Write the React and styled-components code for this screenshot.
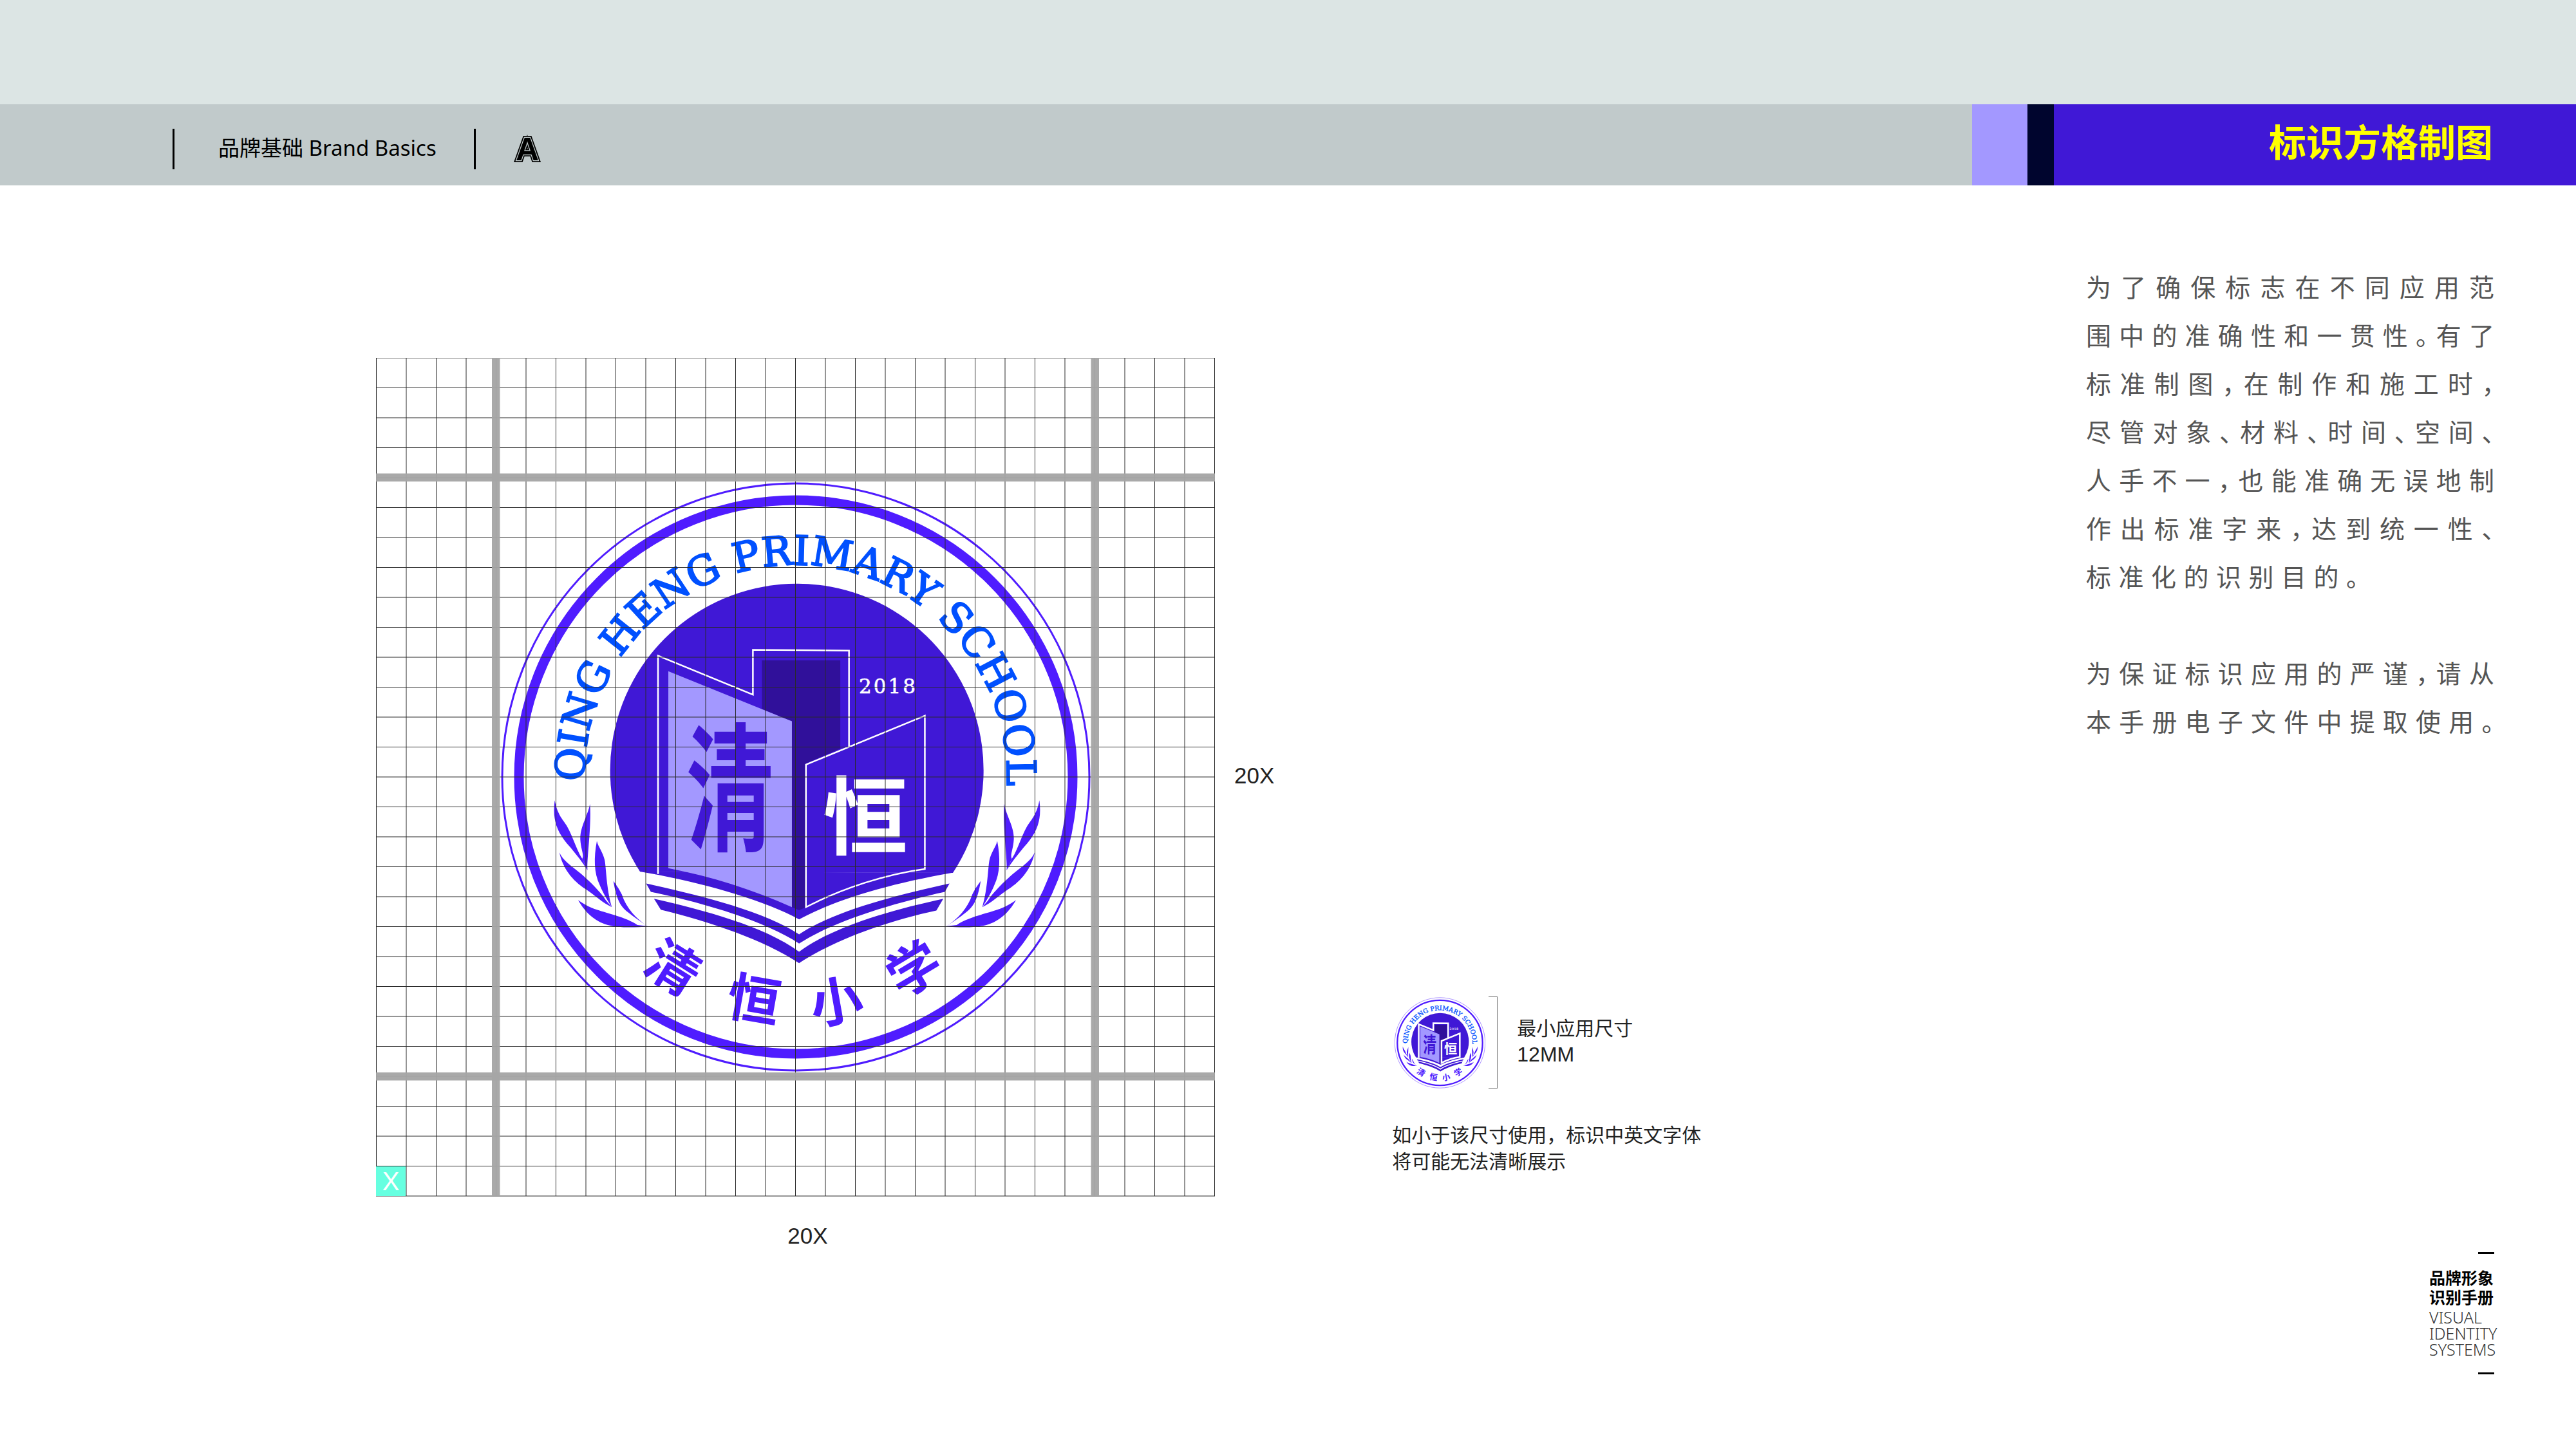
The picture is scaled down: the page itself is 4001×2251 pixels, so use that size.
import React from "react";
import styled, { createGlobalStyle } from "styled-components";

const SANS = `"Noto Sans", "Noto Sans CJK SC", sans-serif`;
const ARIAL = `"Liberation Sans", "Noto Sans CJK SC", sans-serif`;
const CJK = `"Noto Sans CJK SC", "Noto Sans", sans-serif`;
const BRAND = "#4018d6";
const RING = "#4f1cff";

const Global = createGlobalStyle`
  html, body { margin: 0; padding: 0; background: #fff; }
  #root { width: 4001px; height: 2251px; overflow: hidden; }
`;

const Page = styled.div`
  width: 4001px;
  height: 2251px;
  display: flex;
  flex-direction: column;
  background: #fff;
`;
const TopBand = styled.div`
  height: 162px;
  flex: none;
  background: #dce5e4;
`;
const Header = styled.header`
  height: 126px;
  flex: none;
  display: flex;
  background: #c1cacb;
`;
const Crumbs = styled.div`
  flex: 1;
  display: flex;
  align-items: center;
  padding: 12px 0 0 268px;
`;
const Divider = styled.i`
  display: block;
  width: 3px;
  height: 63px;
  background: #000;
`;
const CrumbLabel = styled.span`
  margin: 0 58px 0 68px;
  padding-bottom: 4px;
  font: 400 33px/1 ${SANS};
  color: #000;
  white-space: nowrap;
`;
const SectionMark = styled.svg`
  width: 60px;
  height: 60px;
  margin-left: 50px;
  display: block;
`;
const Swatch = styled.div`
  width: ${(p) => p.$w}px;
  background: ${(p) => p.$c};
`;
const TitleBar = styled.div`
  width: 811px;
  display: flex;
  align-items: center;
  justify-content: flex-end;
  padding: 0 129px 14px 0;
  box-sizing: border-box;
  background: ${BRAND};
`;
const Title = styled.h1`
  margin: 0;
  font: 700 58px/1 ${CJK};
  color: #ffff00;
`;
const Body = styled.main`
  flex: 1;
  display: flex;
  padding-left: 584px;
  min-height: 0;
`;
const Figure = styled.section`
  display: grid;
  grid-template-columns: 1303px auto;
  grid-template-rows: 1302px auto;
  column-gap: 30px;
  align-self: flex-start;
  margin-top: 268px;
`;
const Canvas = styled.div`
  position: relative;
  width: 1303px;
  height: 1302px;
`;
const Overlay = styled.svg`
  position: absolute;
  left: 0;
  top: 0;
  width: 1303px;
  height: 1303px;
`;
const BigLogo = styled.div`
  position: absolute;
  left: 194px;
  top: 193px;
  width: 916px;
  height: 916px;
`;
const UnitCell = styled.div`
  position: absolute;
  left: 0;
  bottom: 0;
  width: 46px;
  height: 46px;
  background: #66ffe0;
  color: #fff;
  font: 400 40px/46px ${ARIAL};
  text-align: center;
`;
const Measure = styled.div`
  font: 400 35px/36px ${ARIAL};
  color: #222;
  white-space: nowrap;
`;
const SideMeasure = styled(Measure)`
  align-self: center;
  padding-bottom: 4px;
`;
const BottomMeasure = styled(Measure)`
  padding: 44px 0 0 38px;
  text-align: center;
`;
const MinColumn = styled.section`
  margin: 1260px 0 0 183px;
  width: 560px;
  flex: none;
`;
const MinRow = styled.div`
  display: flex;
  align-items: center;
  padding-left: 4px;
`;
const SmallLogo = styled.div`
  width: 141px;
  height: 142px;
  flex: none;
`;
const Bracket = styled.div`
  width: 13px;
  height: 141px;
  flex: none;
  margin-left: 5px;
  border: 1.5px solid #777;
  border-left: 0;
`;
const MinText = styled.div`
  margin-left: 30px;
  padding-bottom: 2px;
  font: 400 30px/40px ${ARIAL};
  color: #222;
`;
const MinSize = styled.span`
  font-size: 32px;
`;
const Note = styled.p`
  margin: 50px 0 0;
  font: 400 30px/41px ${CJK};
  color: #222;
  white-space: nowrap;
`;
const RightColumn = styled.aside`
  margin-left: auto;
  width: 761px;
  flex: none;
  display: flex;
  flex-direction: column;
  padding: 119px 127px 116px 0;
  box-sizing: border-box;
`;
const Para = styled.div`
  width: 634px;
  margin-bottom: 75px;
  font: 400 39px/75px ${CJK};
  font-feature-settings: "halt";
  color: #555;
`;
const Line = styled.div`
  text-align: ${(p) => (p.$short ? "left" : "justify")};
  text-align-last: ${(p) => (p.$short ? "left" : "justify")};
  letter-spacing: ${(p) => (p.$short ? "11.5px" : "0")};
`;
const Footer = styled.footer`
  margin-top: auto;
  align-self: flex-end;
  width: 101px;
  height: 190px;
  display: flex;
  flex-direction: column;
`;
const Dash = styled.i`
  display: block;
  width: 25px;
  height: 3px;
  align-self: flex-end;
  background: #000;
`;
const FootCn = styled.div`
  margin-top: 21px;
  font: 700 25px/30px ${CJK};
  color: #000;
  white-space: nowrap;
`;
const FootEn = styled.div`
  margin: 5px 0 auto;
  font: 300 25px/25px "Noto Sans", sans-serif;
  color: #333;
  white-space: nowrap;
`;

const Z = "translate(960 1000) scale(.4847 .3954)";
const Leaves = () => (
  <>
    <path d="M1237 630C1245 680 1270 720 1268 770C1266 810 1255 830 1262 845L1245 890C1248 850 1232 720 1237 630Z" />
    <path d="M1350 615C1358 690 1345 740 1300 800C1280 830 1260 860 1245 890L1262 845C1285 800 1295 740 1320 700C1335 675 1345 650 1350 615Z" />
    <path d="M1335 820C1325 880 1295 930 1250 965C1225 985 1195 1020 1167 1035L1185 1010C1200 980 1240 930 1270 900C1300 870 1325 850 1335 820Z" />
    <path d="M1215 775C1225 840 1225 900 1205 950C1195 980 1180 1010 1167 1035C1185 960 1185 880 1190 850C1195 820 1210 800 1215 775Z" />
    <path d="M1275 1007C1255 1050 1225 1090 1180 1105C1140 1118 1090 1115 1050 1110L1085 1105C1120 1075 1180 1060 1215 1045C1240 1035 1260 1020 1275 1007Z" />
    <path d="M1162 932C1155 985 1145 1030 1115 1055C1095 1075 1070 1095 1050 1112C1090 1080 1120 1040 1135 985C1145 960 1155 945 1162 932Z" />
  </>
);

const seal = [
  ["清", 1045, 1504, 32],
  ["恒", 1171, 1554, 10],
  ["小", 1299, 1557, -10],
  ["学", 1420, 1506, -31],
];

const Logo = ({ id }) => (
  <svg viewBox="778 749 916 916" width="100%" height="100%" style={{ display: "block" }}>
    <circle cx="1236" cy="1207" r="456" fill="none" stroke={RING} strokeWidth="3" />
    <circle cx="1236" cy="1207" r="430" fill="none" stroke={RING} strokeWidth="15" />
    <path d="M994 1354A290 290 0 1 1 1480 1356Z" fill={BRAND} />
    <path id={id} d="M908 1214A328 328 0 1 1 1500 1400" fill="none" />
    <text
      fill="#0050ff"
      stroke="#0050ff"
      strokeWidth="2.2"
      fontFamily="'DejaVu Serif', serif"
      fontSize="63"
      letterSpacing="0.1"
    >
      <textPath href={`#${id}`}>QING HENG PRIMARY SCHOOL</textPath>
    </text>
    <g transform={Z}>
      <path fill={BRAND} d="M70 895L128 908C300 950 470 1010 580 1083C690 1010 860 945 1072 900Z" />
      <path fill={BRAND} d="M90 942C250 985 470 1050 580 1142C690 1050 900 985 1062 942L1047 975C880 1020 690 1090 580 1178C470 1090 280 1020 105 975Z" />
      <path fill={BRAND} d="M115 1002C270 1045 470 1110 580 1210C690 1110 880 1045 1042 1002L1020 1048C860 1090 690 1165 580 1255C470 1165 290 1090 137 1045Z" />
      <path fill="#30109a" d="M461 65H712V412L602 470V1035L580 1047L557 1035V305L461 258Z" />
      <path fill="#a398ff" d="M161 108L557 305V1035C430 965 300 915 161 882Z" />
      <path
        fill="none"
        stroke="#fff"
        strokeWidth="2.5"
        vectorEffect="non-scaling-stroke"
        d="M128 905V47L432 200V24L740 27V405M983 283L602 475V1035C720 960 860 905 983 885Z"
      />
      <g fill={RING}>
        <Leaves />
        <g transform="translate(1147 0) scale(-1 1)">
          <Leaves />
        </g>
      </g>
    </g>
    <text
      transform="translate(1134 1304) scale(.88 1.38)"
      textAnchor="middle"
      fontFamily={CJK}
      fontWeight="700"
      fontSize="155"
      fill={BRAND}
    >
      清
    </text>
    <text x="1344" y="1317" textAnchor="middle" fontFamily={CJK} fontWeight="700" fontSize="132" fill="#fff">
      恒
    </text>
    <text x="1334" y="1077" fontFamily="'DejaVu Serif', serif" fontSize="31" letterSpacing="3" stroke="#fff" strokeWidth=".6" fill="#fff">
      2018
    </text>
    <g fill={RING} fontFamily={CJK} fontWeight="700" fontSize="82" textAnchor="middle">
      {seal.map(([t, x, y, r]) => (
        <text key={t} transform={`translate(${x} ${y}) rotate(${r})`} y="29">
          {t}
        </text>
      ))}
    </g>
  </svg>
);

const cell = 46.5;
const ticks = Array.from({ length: 29 }, (_, i) => i * cell);
const GridLines = () => (
  <Overlay viewBox="0 0 1303 1303">
    <g stroke="#2a2a2a" strokeWidth="1">
      {ticks.map((t) => (
        <React.Fragment key={t}>
          <line x1={t + 0.5} y1="0" x2={t + 0.5} y2="1302" />
          <line x1="0" y1={t} x2="1303" y2={t} />
        </React.Fragment>
      ))}
    </g>
    <g fill="#a6a6a6" fillOpacity="0.96">
      <rect x="180" y="0" width="12.5" height="1302" />
      <rect x="1110.5" y="0" width="12.5" height="1302" />
      <rect x="0" y="179.5" width="1303" height="12.5" />
      <rect x="0" y="1110" width="1303" height="12.5" />
    </g>
  </Overlay>
);

const para1 = [
  "为了确保标志在不同应用范",
  "围中的准确性和一贯性。有了",
  "标准制图，在制作和施工时，",
  "尽管对象、材料、时间、空间、",
  "人手不一，也能准确无误地制",
  "作出标准字来，达到统一性、",
];
const para2 = ["为保证标识应用的严谨，请从", "本手册电子文件中提取使用。"];

export default function App() {
  return (
    <Page>
      <Global />
      <TopBand />
      <Header>
        <Crumbs>
          <Divider />
          <CrumbLabel>品牌基础 Brand Basics</CrumbLabel>
          <Divider />
          <SectionMark viewBox="0 0 60 60">
            <g fontFamily="'Liberation Sans', sans-serif" fontWeight="700" fontSize="50" textAnchor="middle">
              <text x="30" y="48" fill="#000" stroke="#000" strokeWidth="6" strokeLinejoin="miter">A</text>
              <text x="30" y="48" fill="#000" stroke="#c1cacb" strokeWidth="2.4" strokeLinejoin="miter">A</text>
              <text x="30" y="48" fill="#000">A</text>
            </g>
          </SectionMark>
        </Crumbs>
        <Swatch $w={86} $c="#a398ff" />
        <Swatch $w={41} $c="#00052e" />
        <TitleBar>
          <Title>标识方格制图</Title>
        </TitleBar>
      </Header>
      <Body>
        <Figure>
          <Canvas>
            <BigLogo>
              <Logo id="arc-big" />
            </BigLogo>
            <GridLines />
            <UnitCell>X</UnitCell>
          </Canvas>
          <SideMeasure>20X</SideMeasure>
          <BottomMeasure>20X</BottomMeasure>
        </Figure>
        <MinColumn>
          <MinRow>
            <SmallLogo>
              <Logo id="arc-small" />
            </SmallLogo>
            <Bracket />
            <MinText>
              最小应用尺寸
              <br />
              <MinSize>12MM</MinSize>
            </MinText>
          </MinRow>
          <Note>
            如小于该尺寸使用，标识中英文字体
            <br />
            将可能无法清晰展示
          </Note>
        </MinColumn>
        <RightColumn>
          <Para>
            {para1.map((l) => (
              <Line key={l}>{l}</Line>
            ))}
            <Line $short>标准化的识别目的。</Line>
          </Para>
          <Para>
            {para2.map((l) => (
              <Line key={l}>{l}</Line>
            ))}
          </Para>
          <Footer>
            <Dash />
            <FootCn>
              品牌形象
              <br />
              识别手册
            </FootCn>
            <FootEn>
              VISUAL
              <br />
              IDENTITY
              <br />
              SYSTEMS
            </FootEn>
            <Dash />
          </Footer>
        </RightColumn>
      </Body>
    </Page>
  );
}
